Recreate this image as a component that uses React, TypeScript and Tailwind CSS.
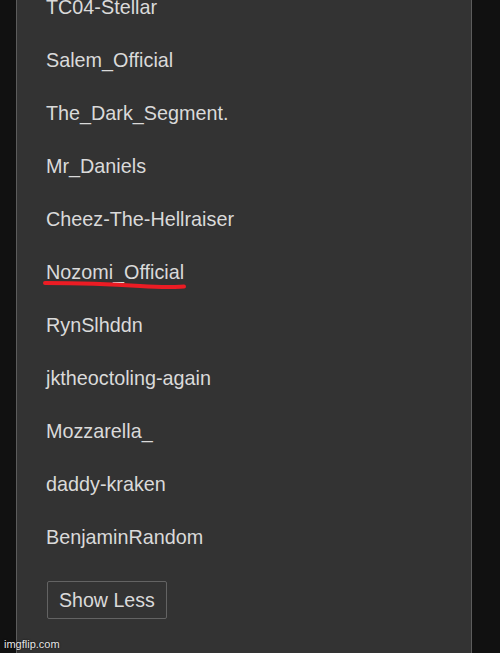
const USERS = [
  "TC04-Stellar",
  "Salem_Official",
  "The_Dark_Segment.",
  "Mr_Daniels",
  "Cheez-The-Hellraiser",
  "Nozomi_Official",
  "RynSlhddn",
  "jktheoctoling-again",
  "Mozzarella_",
  "daddy-kraken",
  "BenjaminRandom",
];

export default function App() {
  return (
    <div
      className="relative flex h-[653px] w-[500px] overflow-hidden bg-[#111111]"
      style={{ fontFamily: '"Liberation Sans", Arial, sans-serif' }}
    >
      <div className="w-4 shrink-0" />

      {/* PANEL */}
      <div className="relative w-[456px] shrink-0 border-x border-[#5c5c5c] bg-[#333333] pl-[29px]">
        <ul className="-mt-[19px]">
          {USERS.map((name) => (
            <li
              key={name}
              className="h-[53px] text-[19.8px] leading-[53px] text-[#dadada]"
            >
              {name}
            </li>
          ))}
        </ul>

        <button className="ml-px mt-[17px] h-[38px] rounded-[2px] border border-[#636363] px-[11px] text-[19.6px] leading-[36px] text-[#dadada]">
          Show Less
        </button>
      </div>

      {/* red underline */}
      <svg
        className="pointer-events-none absolute left-0 top-0"
        width="500"
        height="653"
      >
        <path
          d="M45 283 C 80 283, 110 284, 140 286 S 175 287, 184 286.5"
          stroke="#ec1c24"
          strokeWidth="4"
          strokeLinecap="round"
          fill="none"
        />
      </svg>

      {/* watermark */}
      <div className="absolute bottom-[3px] left-[4px] text-[11px] leading-none text-[#e6e6e6] [text-shadow:0_0_2px_#000]">
        imgflip.com
      </div>
    </div>
  );
}
